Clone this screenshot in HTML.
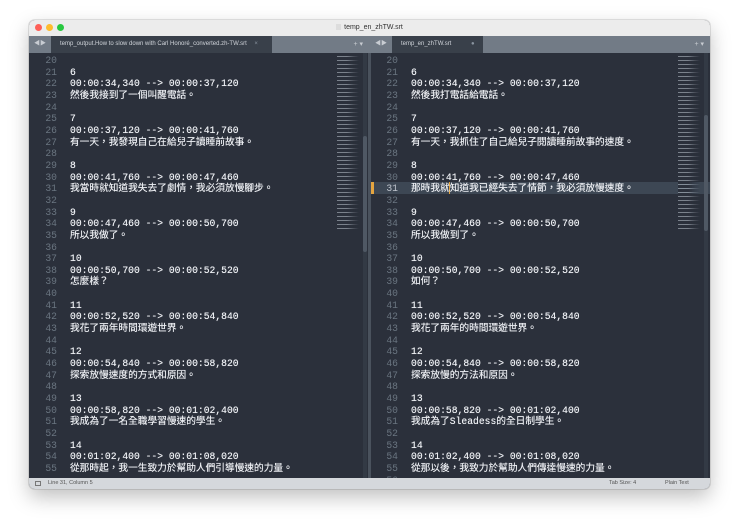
<!DOCTYPE html>
<html><head><meta charset="utf-8"><style>
*{margin:0;padding:0;box-sizing:border-box}
body{width:740px;height:529px;background:#fff;position:relative;overflow:hidden;font-family:"Liberation Sans","Noto Sans CJK TC",sans-serif}
.win{position:absolute;left:29px;top:20px;width:681px;height:469px;border-radius:6px;overflow:hidden;box-shadow:0 8px 20px rgba(0,0,0,.25),0 0 0 1px rgba(0,0,0,.1);background:#2b303b}
.title{position:absolute;left:0;top:0;width:100%;height:16px;background:#ececec;font-size:7px;color:#333;text-align:center;line-height:16px}
.dot{position:absolute;top:4px;width:7px;height:7px;border-radius:50%}
.tabbar{position:absolute;top:16px;height:17px;background:#727b86}
.tab{position:absolute;top:0;height:17px;background:#39404a;color:#d0d4da;font-size:6px;line-height:17px;padding-left:9px}
.pane{position:absolute;top:33px;height:425px;background:#2b303b;overflow:hidden}
.ln{position:absolute;top:2px;text-align:right;color:#6a7580;font:9.7px/11.66px "Liberation Mono","Noto Sans CJK TC",monospace;white-space:pre}
.tx{position:absolute;top:2px;color:#eef0f4;font:9.7px/11.66px "Liberation Mono","Noto Sans CJK TC",monospace;white-space:pre;text-shadow:0 0 .4px #eef0f4}
.mini{position:absolute;top:2px;width:22px;height:175px;background:repeating-linear-gradient(#2b303b 0,#2b303b 1px,rgba(190,198,208,.55) 1px,rgba(190,198,208,.55) 2px,#2b303b 2px,#2b303b 4px);-webkit-mask:linear-gradient(90deg,#000 45%,rgba(0,0,0,.4) 75%,transparent)}
.sb{position:absolute;top:0;width:4px;height:425px;background:#333a45}
.thumb{position:absolute;width:4px;background:#4f5864;border-radius:2px}
.status{position:absolute;left:0;top:458px;width:100%;height:11px;background:#d5d8dc;font-size:5.5px;color:#555;line-height:11px}
</style></head><body>
<div class="win">
 <div class="title"><span class="dot" style="left:6px;background:#fe5f57"></span><span class="dot" style="left:17px;background:#febc2e"></span><span class="dot" style="left:28px;background:#28c840"></span><span style="display:inline-block;width:5px;height:6px;background:#ddd;margin-right:3px;vertical-align:-1px"></span>temp_en_zhTW.srt</div>
 <div class="tabbar" style="left:0;width:340px"><span style="position:absolute;left:5px;top:0;color:#c8ccd2;font-size:6px;line-height:17px">◀▶</span><div class="tab" style="left:22px;width:221px">temp_output.How to slow down with Carl Honoré_converted.zh-TW.srt <span style="color:#8a94a0;margin-left:6px">×</span></div><span style="position:absolute;right:6px;color:#c8ccd2;font-size:7px;line-height:17px">+ ▾</span></div>
 <div class="tabbar" style="left:340px;width:341px"><span style="position:absolute;left:6px;color:#c8ccd2;font-size:6px;line-height:17px">◀▶</span><div class="tab" style="left:23px;width:91px">temp_en_zhTW.srt <span style="position:absolute;left:79px;color:#8a94a0">●</span></div><span style="position:absolute;right:6px;color:#c8ccd2;font-size:7px;line-height:17px">+ ▾</span></div>
 <div class="pane" style="left:0;width:339px">
  <div class="ln" style="left:0;width:28px">20
21
22
23
24
25
26
27
28
29
30
31
32
33
34
35
36
37
38
39
40
41
42
43
44
45
46
47
48
49
50
51
52
53
54
55</div>
  <div class="tx" style="left:41px">
6
00:00:34,340 --> 00:00:37,120
然後我接到了一個叫醒電話。

7
00:00:37,120 --> 00:00:41,760
有一天，我發現自己在給兒子讀睡前故事。

8
00:00:41,760 --> 00:00:47,460
我當時就知道我失去了劇情，我必須放慢腳步。

9
00:00:47,460 --> 00:00:50,700
所以我做了。

10
00:00:50,700 --> 00:00:52,520
怎麼樣？

11
00:00:52,520 --> 00:00:54,840
我花了兩年時間環遊世界。

12
00:00:54,840 --> 00:00:58,820
探索放慢速度的方式和原因。

13
00:00:58,820 --> 00:01:02,400
我成為了一名全職學習慢速的學生。

14
00:01:02,400 --> 00:01:08,020
從那時起，我一生致力於幫助人們引導慢速的力量。</div>
  <div class="mini" style="left:308px"></div>
  <div class="sb" style="left:334px"><div class="thumb" style="top:83px;height:116px"></div></div>
 </div>
 <div style="position:absolute;left:339px;top:33px;width:3px;height:425px;background:#4a525d"></div>
 <div class="pane" style="left:342px;width:339px">
  <div style="position:absolute;left:0;top:129px;width:339px;height:12px;background:#3d4754"></div>
  <div style="position:absolute;left:0;top:129px;width:3px;height:12px;background:#e5a540"></div>
  <div style="position:absolute;left:78px;top:129px;width:1px;height:12px;background:#e5a540"></div>
  <div class="ln" style="left:0;width:27px">20
21
22
23
24
25
26
27
28
29
30
<span style="color:#c0c5ce">31</span>
32
33
34
35
36
37
38
39
40
41
42
43
44
45
46
47
48
49
50
51
52
53
54
55
56</div>
  <div class="tx" style="left:40px">
6
00:00:34,340 --> 00:00:37,120
然後我打電話給電話。

7
00:00:37,120 --> 00:00:41,760
有一天，我抓住了自己給兒子閱讀睡前故事的速度。

8
00:00:41,760 --> 00:00:47,460
那時我就知道我已經失去了情節，我必須放慢速度。

9
00:00:47,460 --> 00:00:50,700
所以我做到了。

10
00:00:50,700 --> 00:00:52,520
如何？

11
00:00:52,520 --> 00:00:54,840
我花了兩年的時間環遊世界。

12
00:00:54,840 --> 00:00:58,820
探索放慢的方法和原因。

13
00:00:58,820 --> 00:01:02,400
我成為了Sleadess的全日制學生。

14
00:01:02,400 --> 00:01:08,020
從那以後，我致力於幫助人們傳達慢速的力量。</div>
  <div class="mini" style="left:307px"></div>
  <div class="sb" style="left:333px"><div class="thumb" style="top:62px;height:116px"></div></div>
 </div>
 <div class="status"><span style="position:absolute;left:6px;top:3px;width:6px;height:5px;border:1px solid #777"></span><span style="position:absolute;left:19px">Line 31, Column 5</span><span style="position:absolute;left:580px">Tab Size: 4</span><span style="position:absolute;left:636px">Plain Text</span></div>
</div>
</body></html>
